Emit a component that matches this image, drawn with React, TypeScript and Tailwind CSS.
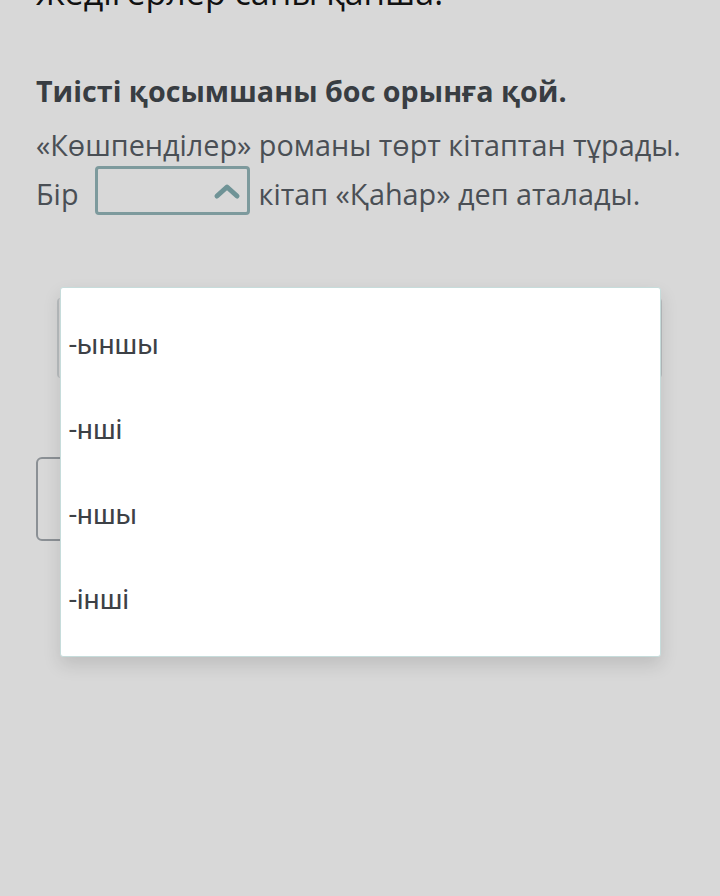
const options = ["-ыншы", "-нші", "-ншы", "-інші"];

const App = () => {
  return (
    <div className="relative min-h-[896px] w-[720px] overflow-hidden bg-[#d8d8d8] font-['Open_Sans',sans-serif]">
      <p className="-mt-[28px] pl-[36px] text-[34px] leading-[40px] text-[#111]">
        Жедігерлер саны қанша.
      </p>

      <div className="px-[36px] pt-[60px]">
        <h2 className="text-[28.7px] font-bold leading-[38px] text-[#383d42]">
          Тиісті қосымшаны бос орынға қой.
        </h2>
        <p className="mt-[10px] text-[28.8px] leading-[49px] text-[#4a4f55]">
          «Көшпенділер» романы төрт кітаптан тұрады.
        </p>
        <div className="flex items-center text-[28.8px] leading-[49px] text-[#4a4f55]">
          <span>Бір</span>
          <div className="ml-[16px] mr-[9px] -mt-[6px] flex h-[49px] w-[155px] items-center justify-end rounded-[4px] border-[3px] border-[#7d9a9d] pr-[6px]">
            <svg width="28" height="18" viewBox="0 0 28 18" fill="none">
              <path d="M4 14 L14 5 L24 14" stroke="#6f9396" strokeWidth="5" strokeLinecap="round" strokeLinejoin="round" />
            </svg>
          </div>
          <span>кітап «Қаһар» деп аталады.</span>
        </div>

        <div className="mt-[80px] ml-[21px] h-[80px] w-[605px] rounded-[4px] border-x-2 border-[#b9bdbf]" />
        <div className="mt-[79px] h-[84px] w-[200px] rounded-[6px] border-2 border-[#8b9095]" />
      </div>

      <div className="absolute left-[60px] top-[287px] w-[601px] rounded-[3px] border border-[#c6dcdb] bg-white py-[14px] shadow-[0_8px_18px_rgba(0,0,0,0.12)]">
        {options.map((o) => (
          <div key={o} className="flex h-[85px] items-center pl-[8px] font-['Roboto',sans-serif] text-[28px] text-[#3d4146]">
            {o}
          </div>
        ))}
      </div>
    </div>
  );
};

export default App;
